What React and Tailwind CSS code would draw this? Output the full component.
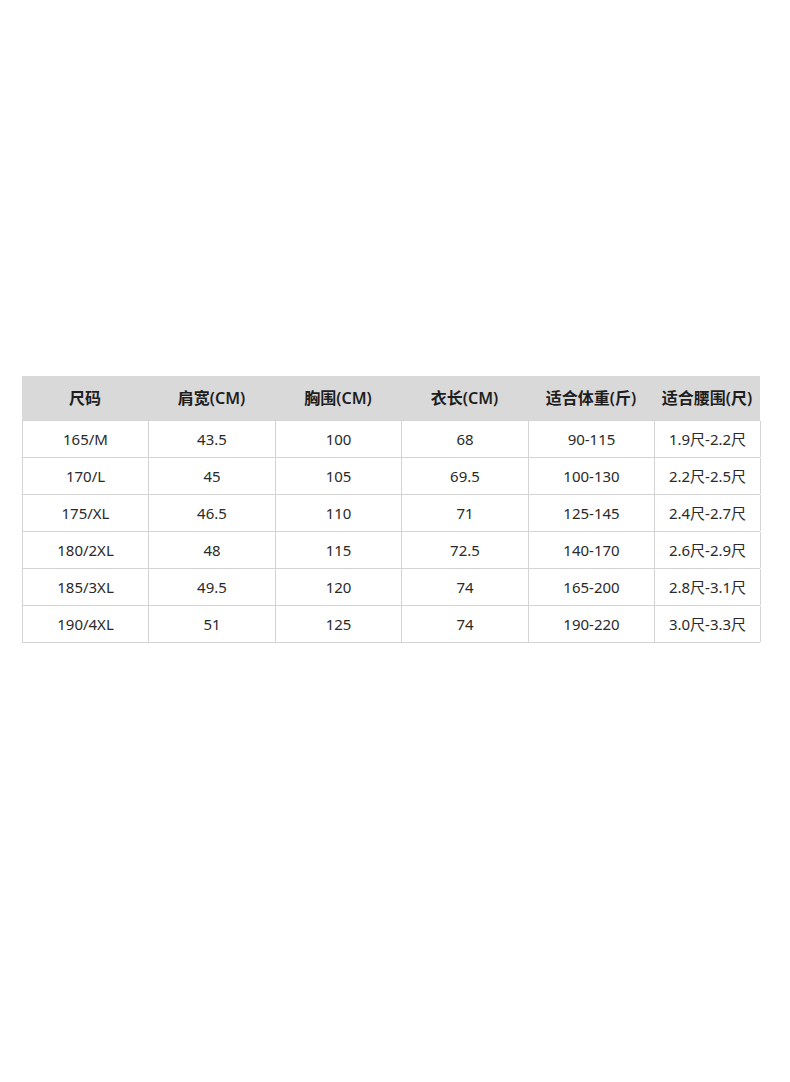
import React from "react";

const headers = ["尺码", "肩宽(CM)", "胸围(CM)", "衣长(CM)", "适合体重(斤)", "适合腰围(尺)"];
const rows = [
  ["165/M", "43.5", "100", "68", "90-115", "1.9尺-2.2尺"],
  ["170/L", "45", "105", "69.5", "100-130", "2.2尺-2.5尺"],
  ["175/XL", "46.5", "110", "71", "125-145", "2.4尺-2.7尺"],
  ["180/2XL", "48", "115", "72.5", "140-170", "2.6尺-2.9尺"],
  ["185/3XL", "49.5", "120", "74", "165-200", "2.8尺-3.1尺"],
  ["190/4XL", "51", "125", "74", "190-220", "3.0尺-3.3尺"],
];

const font = { fontFamily: '"Noto Sans", "Noto Sans CJK SC", sans-serif' };

export default function App() {
  return (
    <div className="w-[790px] h-[1082px] bg-white pt-[376px] pl-[22px]" style={font}>
      <div className="w-[738px]">
        <div className="grid grid-cols-[126px_127px_126px_127px_126px_106px] h-[45px] bg-[#d9d9d9] border-b border-[#d4d4d4]">
          {headers.map((h) => (
            <div key={h} className="flex items-center justify-center text-[16px] font-semibold text-[#1e1e1e]">
              {h}
            </div>
          ))}
        </div>
        {rows.map((r, i) => (
          <div
            key={i}
            className="grid grid-cols-[126px_127px_126px_127px_126px_106px] h-[37px] border-b border-l border-[#d4d4d4]"
          >
            {r.map((c, j) => (
              <div
                key={j}
                className="flex items-center justify-center border-r border-[#d4d4d4] text-[15px] text-[#2a2a2a]"
              >
                {c}
              </div>
            ))}
          </div>
        ))}
      </div>
    </div>
  );
}
